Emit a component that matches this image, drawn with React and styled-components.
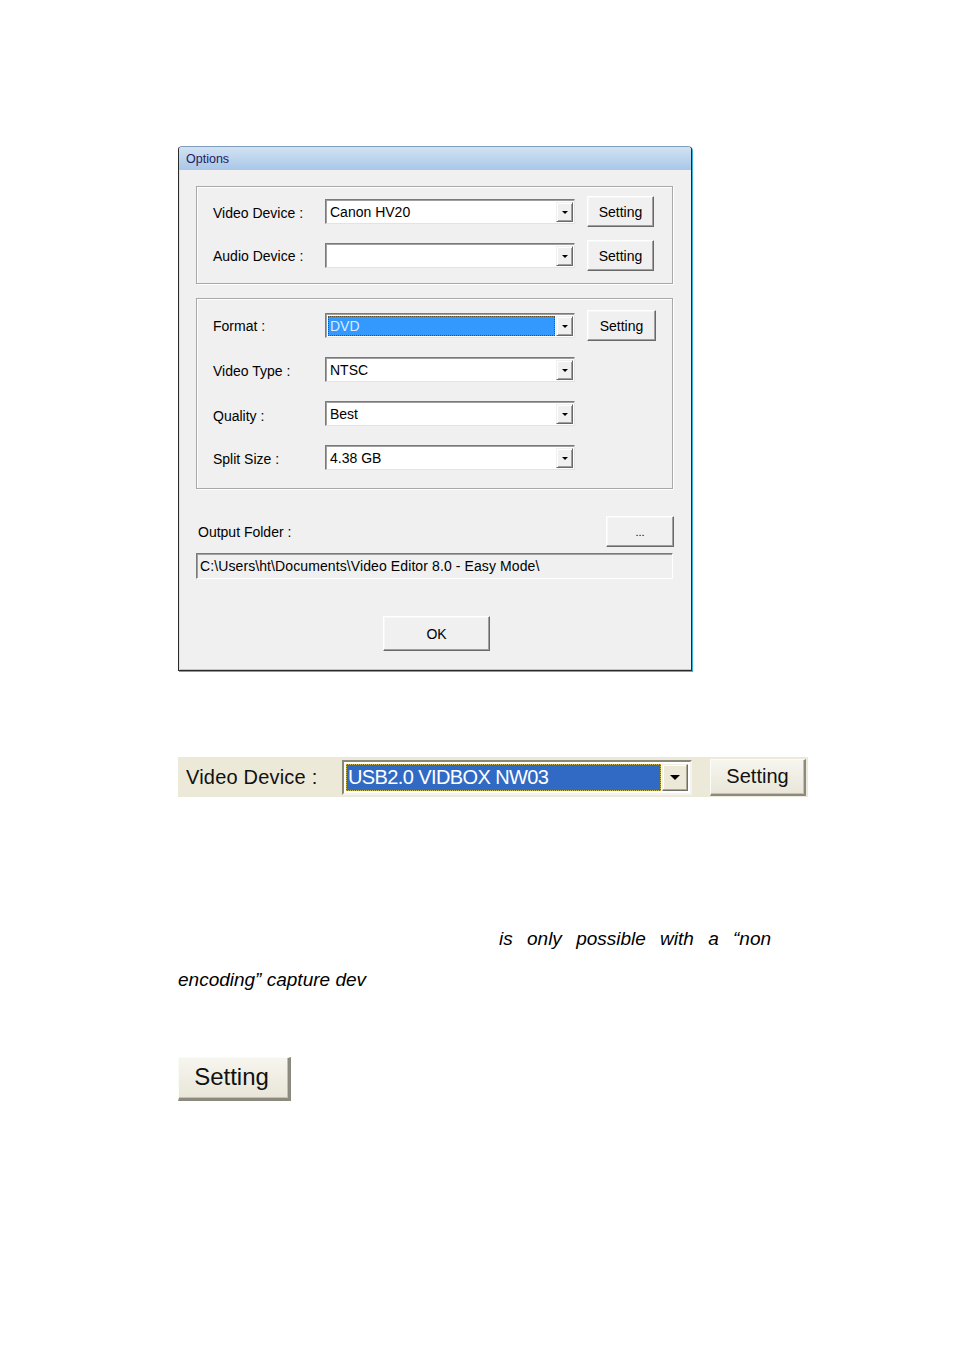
import React from 'react';
import styled, { createGlobalStyle } from 'styled-components';

const GlobalStyle = createGlobalStyle`
  html, body {
    margin: 0;
    padding: 0;
    background: #ffffff;
  }
  body {
    font-family: "Liberation Sans", Arial, sans-serif;
    color: #000;
  }
`;

const Page = styled.div`
  width: 954px;
  height: 1350px;
  box-sizing: border-box;
  padding: 146px 0 0 178px;
  display: flex;
  flex-direction: column;
`;

/* ---------- Options dialog ---------- */

const Dialog = styled.div`
  width: 514px;
  height: 525px;
  box-sizing: border-box;
  border: 1px solid #2a2a2a;
  border-top-color: #7f9db9;
  border-radius: 4px 4px 0 0;
  box-shadow: 1px 1px 0 #3fb2dc, inset 1px 0 0 #d6e4f2, inset 0 -1px 0 #9cd3ea;
  background: #f0f0f0;
  display: flex;
  flex-direction: column;
  overflow: hidden;
`;

const TitleBar = styled.div`
  height: 23px;
  flex-shrink: 0;
  background: linear-gradient(#d2e2f3, #a9c7e8);
  display: flex;
  align-items: center;
  padding-left: 7px;
  font-size: 12.5px;
  color: #22205e;
`;

const Body = styled.div`
  padding: 16px 18px 0 17px;
  display: flex;
  flex-direction: column;
`;

const Group = styled.div`
  width: 477px;
  box-sizing: border-box;
  border: 1px solid #a8a8a8;
  box-shadow: 1px 1px 0 #ffffff, inset 1px 1px 0 #ffffff;
  padding: ${(p) => p.$pad};
  margin-bottom: ${(p) => p.$mb || 0}px;
  display: flex;
  flex-direction: column;
  gap: ${(p) => p.$gap}px;
`;

const Row = styled.div`
  height: 31px;
  display: flex;
  align-items: center;
  padding-left: 16px;
`;

const Label = styled.div`
  width: 112px;
  font-size: 14px;
  padding-top: ${(p) => p.$dy || 0}px;
`;

const Combo = styled.div`
  width: 250px;
  height: 25px;
  box-sizing: border-box;
  background: #fff;
  border-top: 1px solid #7a7a7a;
  border-left: 1px solid #7a7a7a;
  border-right: 1px solid #e3e3e3;
  border-bottom: 1px solid #e3e3e3;
  box-shadow: inset 1px 1px 0 #a0a0a0;
  display: flex;
  align-items: stretch;
  padding: 2px 1px 1px 2px;
`;

const ComboValue = styled.div`
  flex: 1;
  font-size: 14px;
  display: flex;
  align-items: center;
  padding-left: 2px;
  margin-right: 1px;
  background: ${(p) => (p.$selected ? '#3399ff' : 'transparent')};
  color: ${(p) => (p.$selected ? '#dcecff' : '#000')};
  outline: ${(p) => (p.$selected ? '1px dotted #5a4a2a' : 'none')};
  outline-offset: -1px;
`;

const DropButton = styled.div`
  width: 17px;
  box-sizing: border-box;
  background: #f0f0f0;
  border-top: 1px solid #f0f0f0;
  border-left: 1px solid #f0f0f0;
  border-right: 1px solid #696969;
  border-bottom: 1px solid #696969;
  box-shadow: inset 1px 1px 0 #fff, inset -1px -1px 0 #a0a0a0;
  display: flex;
  align-items: center;
  justify-content: center;
`;

const Arrow = styled.div`
  width: 0;
  height: 0;
  border-left: ${(p) => p.$size || 3.5}px solid transparent;
  border-right: ${(p) => p.$size || 3.5}px solid transparent;
  border-top: ${(p) => (p.$size || 3.5)}px solid #000;
`;

const Button = styled.div`
  width: ${(p) => p.$w}px;
  height: ${(p) => p.$h}px;
  box-sizing: border-box;
  margin-left: ${(p) => p.$ml || 0}px;
  background: #f0f0f0;
  border-top: 1px solid #ffffff;
  border-left: 1px solid #ffffff;
  border-right: 1px solid #696969;
  border-bottom: 1px solid #696969;
  box-shadow: inset -1px -1px 0 #a0a0a0, inset 1px 1px 0 #f7f7f7;
  display: flex;
  align-items: center;
  justify-content: center;
  font-size: ${(p) => p.$fs || 14}px;
  color: #000;
  flex-shrink: 0;
`;

const FolderRow = styled.div`
  margin-top: 27px;
  width: 478px;
  display: flex;
  align-items: center;
  justify-content: space-between;
  padding-left: 2px;
  box-sizing: border-box;
  font-size: 14px;
`;

const PathField = styled.div`
  margin-top: 6px;
  width: 477px;
  height: 26px;
  box-sizing: border-box;
  border-top: 1px solid #7a7a7a;
  border-left: 1px solid #7a7a7a;
  border-right: 1px solid #ffffff;
  border-bottom: 1px solid #ffffff;
  box-shadow: inset 1px 1px 0 #a0a0a0;
  padding-left: 3px;
  display: flex;
  align-items: center;
  font-size: 14px;
  letter-spacing: 0.1px;
  background: #f0f0f0;
`;

const Footer = styled.div`
  margin-top: 37px;
  display: flex;
  justify-content: center;
  padding-left: 4px;
`;

/* ---------- XP style strip ---------- */

const Strip = styled.div`
  margin-top: 86px;
  width: 630px;
  height: 40px;
  background: #ece9d8;
  display: flex;
  align-items: center;
  padding-left: 8px;
  box-sizing: border-box;
`;

const StripLabel = styled.div`
  width: 156px;
  font-size: 20px;
  letter-spacing: 0.2px;
  color: #111;
`;

const XPCombo = styled.div`
  width: 350px;
  height: 35px;
  box-sizing: border-box;
  background: #fff;
  border-top: 2px solid #8a8778;
  border-left: 2px solid #8a8778;
  border-right: 2px solid #f4f3ee;
  border-bottom: 2px solid #f4f3ee;
  padding: 2px;
  display: flex;
`;

const XPValue = styled.div`
  flex: 1;
  background: #316ac5;
  color: #fff;
  outline: 1px dotted #c9b54a;
  outline-offset: -1px;
  font-size: 20px;
  letter-spacing: -0.6px;
  display: flex;
  align-items: center;
  padding-left: 2px;
  margin-right: 1px;
`;

const XPDrop = styled.div`
  width: 26px;
  box-sizing: border-box;
  background: #ece9d8;
  border-right: 1px solid #716f64;
  border-bottom: 1px solid #716f64;
  border-top: 1px solid #f1efe2;
  border-left: 1px solid #f1efe2;
  box-shadow: inset -1px -1px 0 #aca899, inset 1px 1px 0 #fff;
  display: flex;
  align-items: center;
  justify-content: center;
`;

const XPButton = styled.div`
  width: ${(p) => p.$w}px;
  height: ${(p) => p.$h}px;
  margin-left: ${(p) => p.$ml || 0}px;
  box-sizing: border-box;
  background: linear-gradient(#f6f5ef, #e9e6d8);
  border-top: 1px solid #fbfbf7;
  border-left: 1px solid #fbfbf7;
  border-right: 2px solid #8c8a7e;
  border-bottom: 2px solid #8c8a7e;
  box-shadow: inset -1px -1px 0 #c4c1b2;
  display: flex;
  align-items: center;
  justify-content: center;
  font-size: ${(p) => p.$fs}px;
  color: #111;
  flex-shrink: 0;
`;

/* ---------- text ---------- */

const Prose = styled.div`
  margin-top: 121px;
  width: 600px;
  font-size: 19px;
  font-style: italic;
  line-height: 41px;
  color: #000;
`;

const ProseLine = styled.div`
  padding-left: ${(p) => p.$indent || 0}px;
  word-spacing: ${(p) => p.$ws || 0}px;
  white-space: nowrap;
`;

const BottomButtonWrap = styled.div`
  margin-top: 57px;
  display: flex;
`;

const BottomButton = styled(XPButton)`
  border-right-width: 3px;
  border-bottom-width: 3px;
  padding-right: 4px;
  padding-bottom: 2px;
`;

const ComboBox = ({ value, selected }) => (
  <Combo>
    <ComboValue $selected={selected}>{value}</ComboValue>
    <DropButton>
      <Arrow />
    </DropButton>
  </Combo>
);

const App = () => (
  <>
    <GlobalStyle />
    <Page>
      <Dialog>
        <TitleBar>Options</TitleBar>
        <Body>
          <Group $pad="9px 0 12px 0" $gap={13} $mb={14}>
            <Row>
              <Label $dy={3}>Video Device :</Label>
              <ComboBox value="Canon HV20" />
              <Button $w={67} $h={31} $ml={12}>Setting</Button>
            </Row>
            <Row>
              <Label>Audio Device :</Label>
              <ComboBox value="" />
              <Button $w={67} $h={31} $ml={12}>Setting</Button>
            </Row>
          </Group>
          <Group $pad="11px 0 15px 0" $gap={13}>
            <Row>
              <Label $dy={0}>Format :</Label>
              <ComboBox value="DVD" selected />
              <Button $w={69} $h={31} $ml={12}>Setting</Button>
            </Row>
            <Row>
              <Label $dy={2}>Video Type :</Label>
              <ComboBox value="NTSC" />
            </Row>
            <Row>
              <Label $dy={4}>Quality :</Label>
              <ComboBox value="Best" />
            </Row>
            <Row>
              <Label $dy={2}>Split Size :</Label>
              <ComboBox value="4.38 GB" />
            </Row>
          </Group>
          <FolderRow>
            <span>Output Folder :</span>
            <Button $w={68} $h={31} $fs={11}>...</Button>
          </FolderRow>
          <PathField>C:\Users\ht\Documents\Video Editor 8.0 - Easy Mode\</PathField>
          <Footer>
            <Button $w={107} $h={35}>OK</Button>
          </Footer>
        </Body>
      </Dialog>

      <Strip>
        <StripLabel>Video Device :</StripLabel>
        <XPCombo>
          <XPValue>USB2.0 VIDBOX NW03</XPValue>
          <XPDrop>
            <Arrow $size={5} />
          </XPDrop>
        </XPCombo>
        <XPButton $w={96} $h={37} $ml={18} $fs={20}>Setting</XPButton>
      </Strip>

      <Prose>
        <ProseLine $indent={321} $ws={9}>is only possible with a “non</ProseLine>
        <ProseLine>encoding” capture dev</ProseLine>
      </Prose>

      <BottomButtonWrap>
        <BottomButton $w={113} $h={44} $fs={24}>Setting</BottomButton>
      </BottomButtonWrap>
    </Page>
  </>
);

export default App;
